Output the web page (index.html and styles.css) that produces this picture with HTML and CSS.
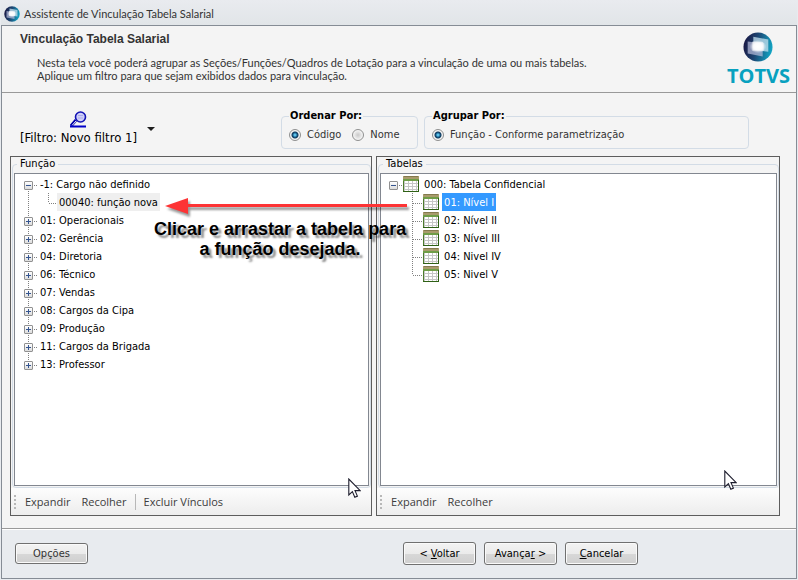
FILE: index.html
```html
<!DOCTYPE html>
<html lang="pt-BR">
<head>
    <meta charset="UTF-8">
    <meta name="viewport" content="width=device-width, initial-scale=1.0">
    <title>Assistente de Vinculação Tabela Salarial</title>
    <link rel="stylesheet" href="styles.css">
</head>
<body>

<!-- shared drawings -->
<svg class="defs" width="0" height="0" aria-hidden="true">
    <defs>
        <linearGradient id="globe-fill" x1="0" y1="0.3" x2="1" y2="0.5">
            <stop offset="0" stop-color="#191541"/>
            <stop offset="0.45" stop-color="#1d4673"/>
            <stop offset="1" stop-color="#12a5c4"/>
        </linearGradient>
        <radialGradient id="globe-shine">
            <stop offset="0" stop-color="#fff"/>
            <stop offset="0.5" stop-color="#fff" stop-opacity="0.85"/>
            <stop offset="1" stop-color="#fff" stop-opacity="0"/>
        </radialGradient>
    </defs>
    <symbol id="globe" viewBox="0 0 32 32">
        <circle cx="16" cy="16" r="15.5" fill="url(#globe-fill)"/>
        <path d="M11 5 L27 8 V21 L11 19 Z" fill="#c5e3f0" fill-opacity="0.75"/>
        <path d="M5 10 L21 12 V26 L5 23 Z" fill="#b9bedb" fill-opacity="0.7"/>
        <path d="M10 10 L22 11 V20 L10 20 Z" fill="#fff" fill-opacity="0.6"/>
        <ellipse cx="16" cy="15.5" rx="9" ry="7" fill="url(#globe-shine)"/>
    </symbol>
    <symbol id="sheet" viewBox="0 0 16 16">
        <rect x="0.5" y="0.5" width="15" height="15" fill="#fff" stroke="#4d7c2c"/>
        <rect x="0" y="0" width="16" height="3" fill="#a89b6c"/>
        <path d="M1 0.5 H15" stroke="#857a4e"/>
        <rect x="0" y="3" width="16" height="2" fill="#6f9d47"/>
        <path d="M1.5 5 V15 M5.5 5 V15 M9.5 5 V15 M13.5 5 V15 M1 7.5 H15 M1 10.5 H15 M1 13.5 H15" stroke="#c6c6c6"/>
        <path d="M0 15.5 H16 M15.5 4 V16" stroke="#2f6116"/>
    </symbol>
    <symbol id="pointer" viewBox="0 0 13 20">
        <path d="M0.8 1 V17 L4.4 13.6 L6.8 19.2 L9.4 18.1 L7 12.6 H12.2 Z" fill="#fff" stroke="#1c1c2c" stroke-width="1.1"/>
    </symbol>
</svg>

<header class="titlebar">
    <svg class="titlebar-icon" width="16" height="16"><use href="#globe"/></svg>
    <span>Assistente de Vinculação Tabela Salarial</span>
</header>

<main class="window">
    <section class="intro">
        <div>
            <h1>Vinculação Tabela Salarial</h1>
            <p>Nesta tela você poderá agrupar as Seções/Funções/Quadros de Lotação para a vinculação de uma ou mais tabelas.<br>
            Aplique um filtro para que sejam exibidos dados para vinculação.</p>
        </div>
        <div class="logo">
            <svg width="30" height="30"><use href="#globe"/></svg>
            <span>TOTVS</span>
        </div>
    </section>

    <section class="content">
        <div class="options">
            <div class="filter">
                <button class="filter-button">
                    <svg width="17" height="17" viewBox="0 0 17 17">
                        <path d="M1 15 L6 9" stroke="#0000a8" stroke-width="3"/>
                        <path d="M2 14.5 L7 9" stroke="#fff"/>
                        <circle cx="10.5" cy="6" r="5" fill="#cfcff8" stroke="#1212b4" stroke-width="1.6"/>
                        <path d="M8 4.5 H13 M8 7 H13" stroke="#aaaae8"/>
                        <path d="M0 15.5 H16" stroke="#0000c8" stroke-width="2"/>
                    </svg>
                    <span>[Filtro: Novo filtro 1]</span>
                </button>
                <button class="filter-menu" aria-label="Filtros">
                    <svg width="8" height="4"><path d="M0 0 H8 L4 4 Z" fill="#1e1e1e"/></svg>
                </button>
            </div>
            <fieldset class="group">
                <legend>Ordenar Por:</legend>
                <label><input type="radio" name="ordem" checked>Código</label>
                <label><input type="radio" name="ordem">Nome</label>
            </fieldset>
            <fieldset class="group group-wide">
                <legend>Agrupar Por:</legend>
                <label><input type="radio" name="grupo" checked>Função - Conforme parametrização</label>
            </fieldset>
        </div>

        <div class="panels">
            <div class="panel">
                <fieldset class="panel-box">
                    <legend>Função</legend>
                    <ul class="tree">
                        <li>
                            <div class="row"><button class="expander open" aria-label="Recolher"></button><i class="joint"></i><span class="label">-1: Cargo não definido</span></div>
                            <ul class="branch">
                                <li><div class="row"><i class="joint"></i><span class="label current">00040: função nova</span></div></li>
                            </ul>
                        </li>
                        <li><div class="row"><button class="expander" aria-label="Expandir"></button><i class="joint"></i><span class="label">01: Operacionais</span></div></li>
                        <li><div class="row"><button class="expander" aria-label="Expandir"></button><i class="joint"></i><span class="label">02: Gerência</span></div></li>
                        <li><div class="row"><button class="expander" aria-label="Expandir"></button><i class="joint"></i><span class="label">04: Diretoria</span></div></li>
                        <li><div class="row"><button class="expander" aria-label="Expandir"></button><i class="joint"></i><span class="label">06: Técnico</span></div></li>
                        <li><div class="row"><button class="expander" aria-label="Expandir"></button><i class="joint"></i><span class="label">07: Vendas</span></div></li>
                        <li><div class="row"><button class="expander" aria-label="Expandir"></button><i class="joint"></i><span class="label">08: Cargos da Cipa</span></div></li>
                        <li><div class="row"><button class="expander" aria-label="Expandir"></button><i class="joint"></i><span class="label">09: Produção</span></div></li>
                        <li><div class="row"><button class="expander" aria-label="Expandir"></button><i class="joint"></i><span class="label">11: Cargos da Brigada</span></div></li>
                        <li><div class="row"><button class="expander" aria-label="Expandir"></button><i class="joint"></i><span class="label">13: Professor</span></div></li>
                    </ul>
                </fieldset>
                <div class="toolbar">
                    <button>Expandir</button>
                    <button>Recolher</button>
                    <i class="separator"></i>
                    <button>Excluir Vínculos</button>
                </div>
            </div>

            <div class="panel panel-tables">
                <fieldset class="panel-box">
                    <legend>Tabelas</legend>
                    <ul class="tree">
                        <li>
                            <div class="row"><button class="expander open" aria-label="Recolher"></button><i class="joint"></i><svg width="16" height="16"><use href="#sheet"/></svg><span class="label">000: Tabela Confidencial</span></div>
                            <ul class="branch">
                                <li><div class="row"><i class="joint"></i><svg width="16" height="16"><use href="#sheet"/></svg><span class="label selected">01: Nível I</span></div></li>
                                <li><div class="row"><i class="joint"></i><svg width="16" height="16"><use href="#sheet"/></svg><span class="label">02: Nível II</span></div></li>
                                <li><div class="row"><i class="joint"></i><svg width="16" height="16"><use href="#sheet"/></svg><span class="label">03: Nível III</span></div></li>
                                <li><div class="row"><i class="joint"></i><svg width="16" height="16"><use href="#sheet"/></svg><span class="label">04: Nivel IV</span></div></li>
                                <li><div class="row"><i class="joint"></i><svg width="16" height="16"><use href="#sheet"/></svg><span class="label">05: Nivel V</span></div></li>
                            </ul>
                        </li>
                    </ul>
                </fieldset>
                <div class="toolbar">
                    <button>Expandir</button>
                    <button>Recolher</button>
                </div>
            </div>
        </div>
    </section>

    <footer class="actions">
        <button class="button button-options">Opções</button>
        <div class="steps">
            <button class="button">&lt; <u>V</u>oltar</button>
            <button class="button">Avança<u>r</u> &gt;</button>
            <button class="button"><u>C</u>ancelar</button>
        </div>
    </footer>
</main>

<!-- drag and drop hint -->
<svg class="arrow" width="250" height="26" viewBox="0 0 250 26">
    <path d="M2 11 L25 3 V9 H244 V12 H25 V19 Z" fill="#fd3435"/>
</svg>
<p class="hint">Clicar e arrastar a tabela para<br>a função desejada.</p>
<svg class="pointer pointer-left" width="13" height="20"><use href="#pointer"/></svg>
<svg class="pointer pointer-right" width="13" height="20"><use href="#pointer"/></svg>

</body>
</html>
```
FILE: styles.css
```css
* {
    box-sizing: border-box;
}

body {
    margin: 0;
    height: 100vh;
    display: flex;
    flex-direction: column;
    position: relative;
    overflow: hidden;
    padding: 0 1px 1px;
    background: #e8ebef;
    font-family: "DejaVu Sans Condensed", "DejaVu Sans", Tahoma, sans-serif;
    font-size: 11px;
    line-height: 14px;
    color: #000;
}

button {
    font: inherit;
    color: inherit;
    border: none;
    background: none;
    padding: 0;
}

.defs {
    position: absolute;
}

.titlebar {
    height: 25px;
    display: flex;
    align-items: center;
    gap: 4px;
    padding: 2px 3px 0;
    background: linear-gradient(#e9ebef, #e1e5e8);
    font-family: Lato, sans-serif;
    color: #333;
}

.window {
    flex: 1;
    display: flex;
    flex-direction: column;
    border: 1px solid #858c95;
    background: #f4f4f4;
}

/* header */
.intro {
    height: 67px;
    display: flex;
    justify-content: space-between;
    padding: 6px 6px 0 18px;
    border-bottom: 1px solid #999;
    color: #333;
}

.intro h1 {
    margin: 0 0 10px;
    font-family: "Liberation Sans", Arial, sans-serif;
    font-size: 12px;
}

.intro p {
    margin: 0 0 0 17px;
    font-family: Lato, sans-serif;
    line-height: 13px;
}

.logo {
    display: flex;
    flex-direction: column;
    align-items: center;
    font-family: "Open Sans", sans-serif;
    font-size: 20px;
    font-weight: bold;
    line-height: 27px;
    color: #08a1bf;
}

/* filter and grouping */
.content {
    flex: 1;
    display: flex;
    flex-direction: column;
    padding: 16px 16px 12px 8px;
}

.options {
    display: flex;
    padding: 0 31px 7px 9px;
}

.filter {
    flex: 0 0 262px;
    display: flex;
    align-items: flex-start;
    gap: 10px;
    padding-top: 2px;
}

.filter-button {
    display: flex;
    flex-direction: column;
    align-items: center;
    padding-left: 1px;
    font-size: 13px;
    line-height: 19px;
}

.filter-menu {
    display: flex;
    padding-top: 16px;
}

.group {
    width: 137px;
    height: 40px;
    margin: 0 6px 0 0;
    padding: 4px 7px 0;
    display: flex;
    gap: 11px;
    border: 1px solid #d3dce6;
    border-radius: 4px;
    color: #333;
}

.group-wide {
    width: auto;
    flex: 1;
    margin-right: 0;
}

.group legend {
    padding: 0 1px;
    font-weight: bold;
    color: #000;
}

.group label {
    display: flex;
    align-items: center;
    gap: 6px;
    height: 16px;
}

.group input {
    appearance: none;
    width: 12px;
    height: 12px;
    margin: 0;
    border: 1px solid #8e8f8f;
    border-radius: 50%;
    background: radial-gradient(circle, #c9c9c9, #f6f6f6 70%);
}

.group input:checked {
    background: radial-gradient(circle at 50% 50%, #5cc0e8 0 1px, #17618f 2px, #123a5c 3px, #f4f4f4 4px);
}

/* panels */
.panels {
    flex: 1;
    display: flex;
    gap: 4px;
}

.panel {
    flex: 362;
    display: flex;
    flex-direction: column;
    border: 1px solid #5d5d5d;
}

.panel-tables {
    flex: 404;
}

.panel-box {
    flex: 1;
    display: flex;
    margin: 0 0 0 1px;
    padding: 2px 1px 1px;
    border: 1px solid #d3dce6;
    border-radius: 4px;
}

.panel-box legend {
    margin-left: 3px;
    padding: 0 3px;
}

.tree {
    flex: 1;
    margin: 0;
    padding: 1px 0 0 9px;
    border: 1px solid #828790;
    background: #fff;
    list-style: none;
}

.panel-tables .tree {
    padding-left: 8px;
}

/* dotted guide down the side of each level */
.tree li {
    background: repeating-linear-gradient(#808080 0 1px, transparent 1px 2px) 4px 0 / 1px 100% no-repeat;
}

.tree > li:first-child {
    background-position: 4px 10px;
}

.tree > li:last-child {
    background-size: 1px 10px;
    background-position: 4px 0;
}

.tree > li:only-child {
    background: none;
}

.branch {
    margin: 0 0 0 24px;
    padding: 0;
    list-style: none;
}

.panel-tables .branch {
    margin-left: 23px;
}

.tree .branch li {
    background-position: 0 0;
}

.tree .branch li:last-child {
    background-size: 1px 10px;
}

.row {
    display: flex;
    align-items: center;
    height: 18px;
}

.expander {
    width: 9px;
    height: 9px;
    margin-top: 2px;
    border: 1px solid #919191;
    border-radius: 1px;
    background:
        linear-gradient(#34548f, #34548f) center / 5px 1px no-repeat,
        linear-gradient(#34548f, #34548f) center / 1px 5px no-repeat,
        linear-gradient(#fff, #dcdcdc);
}

.expander.open {
    background:
        linear-gradient(#34548f, #34548f) center / 5px 1px no-repeat,
        linear-gradient(#fff, #dcdcdc);
}

.joint {
    width: 5px;
    height: 1px;
    margin-top: 2px;
    background: repeating-linear-gradient(to right, transparent 0 1px, #808080 1px 2px);
}

.branch .joint {
    width: 9px;
}

.panel-tables .branch .joint {
    width: 11px;
}

.label {
    height: 18px;
    padding: 1px 2px 0;
    line-height: 18px;
}

.row svg + .label {
    margin-left: 3px;
}

.label.current {
    background: #efefef;
}

.label.selected {
    background: #3399ff;
    color: #fff;
}

.toolbar {
    display: flex;
    align-items: center;
    gap: 11px;
    height: 27px;
    padding-left: 14px;
    background:
        repeating-linear-gradient(#b8b8b8 0 2px, transparent 2px 4px) 3px 7px / 2px 14px no-repeat,
        linear-gradient(#fdfdfd, #ededed);
    font-family: "Open Sans", sans-serif;
    color: #3c3c3c;
}

.separator {
    width: 1px;
    height: 16px;
    margin: 0 -3px;
    background: #b8b8b8;
}

/* footer */
.actions {
    height: 50px;
    display: flex;
    align-items: center;
    justify-content: space-between;
    padding: 0 158px 0 13px;
    border-top: 1px solid #999;
    box-shadow: inset 0 1px #fff;
    background: #e8ebef;
}

.steps {
    display: flex;
    gap: 8px;
}

.button {
    width: 73px;
    height: 23px;
    border: 1px solid #707070;
    border-radius: 3px;
    background: linear-gradient(#f3f3f3 0, #ebebeb 50%, #d8d8d8 50%, #cfcfcf 100%);
    box-shadow: inset 0 0 0 1px #fafafa;
}

.button-options {
    height: 21px;
    color: #333;
}

/* hint over the panels */
.arrow {
    position: absolute;
    left: 163px;
    top: 195px;
    filter: drop-shadow(2px 3px 1px rgba(0, 0, 0, 0.4));
}

.hint {
    position: absolute;
    left: 154px;
    top: 219px;
    margin: 0;
    font-family: "Liberation Sans", Arial, sans-serif;
    font-size: 18px;
    font-weight: bold;
    line-height: 20px;
    text-align: center;
    text-shadow: 3px 3px 2px rgba(0, 0, 0, 0.45);
}

.pointer {
    position: absolute;
}

.pointer-left {
    left: 348px;
    top: 478px;
}

.pointer-right {
    left: 724px;
    top: 470px;
}
```
